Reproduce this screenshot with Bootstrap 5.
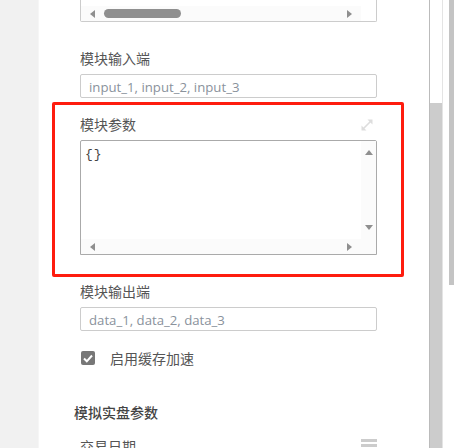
<!DOCTYPE html>
<html lang="zh-CN">

<head>
    <link href="https://cdn.jsdelivr.net/npm/bootstrap@5.3.0/dist/css/bootstrap.min.css" rel="stylesheet">
    <script src="https://cdn.jsdelivr.net/npm/bootstrap@5.3.0/dist/js/bootstrap.bundle.min.js"></script>
    <meta charset="UTF-8" />
    <title>模块参数</title>
    <style>
        html, body { height: 448px; overflow: hidden; background: #fff; }
        body { font-family: "Open Sans", "Noto Sans CJK SC", sans-serif; font-size: 14px; color: #555; }
        .page-wrap { height: 448px; }
        .side-gutter { width: 39px; background: #f1f1f1; border-right: 1px solid #f6f6f6; flex: none; }
        .side-panel { width: 390px; flex: none; position: relative; padding-left: 41px; }
        .v-track { width: 14px; flex: none; border-left: 1px solid #bbb; border-right: 1px solid #e4e4e4; }
        .v-track-thumb { margin-top: 103px; height: 345px; background: #ccc; }
        .outer-track { width: 5px; height: 285px; margin-left: 6px; background: #c4c4c4; flex: none; }
        .field-label { font-family: "Noto Sans CJK SC", sans-serif; font-size: 14px; line-height: 20px; color: #555; height: 20px; }
        .code-top { width: 297px; height: 22px; border: 1px solid #ccc; border-top: 0; border-radius: 0 0 2px 2px; margin-bottom: 26px; position: relative; }
        .h-strip { position: absolute; left: 0; right: 0; bottom: 0; height: 15px; background: #fbfbfb; }
        .h-strip-top { right: 15px; }
        .top-thumb { position: absolute; left: 23px; top: 3px; width: 77px; height: 9px; border-radius: 5px; background: #8f8f8f; }
        .tri { position: absolute; width: 0; height: 0; border-style: solid; border-color: transparent; }
        .tri-left { left: 9px; bottom: 3px; border-width: 4.5px 5px 4.5px 0; border-right-color: #8f8f8f; }
        .tri-right { right: 24px; bottom: 3px; border-width: 4.5px 0 4.5px 5px; border-left-color: #8f8f8f; }
        .tri-up { right: 3px; top: 9px; border-width: 0 4.5px 5px; border-bottom-color: #8f8f8f; }
        .tri-down { right: 3px; bottom: 24px; border-width: 5px 4.5px 0; border-top-color: #8f8f8f; }
        .text-field { width: 297px; height: 24px; margin-top: 6px; border: 1px solid #ccc; border-radius: 2px; padding: 0 8px; line-height: 24px; color: #8a929c; font-size: 13.2px; }
        .code-box { width: 297px; height: 115px; border: 1px solid #aaa; border-radius: 2px 2px 0 0; position: relative; margin-top: 6px; }
        .code-text { font-family: "Liberation Mono", monospace; font-size: 13px; line-height: 17px; letter-spacing: 1px; padding: 5px 0 0 4px; color: #444; }
        .v-strip { position: absolute; top: 0; right: 0; bottom: 0; width: 15px; background: #fbfbfb; }
        .red-frame { position: absolute; left: 13px; top: 102px; width: 352px; height: 175px; border: 3px solid #fe1c0e; border-radius: 2px; pointer-events: none; }
        .expand-ico { position: absolute; left: 322px; top: 119px; }
        .check-box { width: 14px; height: 14px; background: #777; border-radius: 2px; margin-left: 1px; }
        .cache-label { font-family: "Noto Sans CJK SC", sans-serif; font-size: 14px; line-height: 20px; margin-left: 15px; color: #555; }
        .block-title { font-family: "Noto Sans CJK SC", sans-serif; font-weight: 500; font-size: 14px; line-height: 20px; color: #444; margin-left: -6px; }
        .menu-ico { position: absolute; left: 322px; top: 439px; width: 16px; height: 9px; border-top: 3px solid #ccc; }
        .menu-ico::after { content: ""; display: block; height: 3px; margin-top: 2px; background: #ccc; }
    </style>
</head>

<body>
    <div class="page-wrap d-flex">
        <div class="side-gutter"></div>
        <div class="side-panel">
            <div class="code-top">
                <div class="h-strip h-strip-top">
                    <div class="top-thumb"></div>
                </div>
                <div class="tri tri-left"></div>
                <div class="tri tri-right"></div>
            </div>

            <div class="field-label">模块输入端</div>
            <div class="text-field">input_1, input_2, input_3</div>

            <div class="field-label" style="margin-top:16px">模块参数</div>
            <div class="code-box">
                <div class="v-strip"></div>
                <div class="h-strip"></div>
                <div class="code-text position-relative">{}</div>
                <div class="tri tri-up"></div>
                <div class="tri tri-down"></div>
                <div class="tri tri-left"></div>
                <div class="tri tri-right"></div>
            </div>

            <div class="field-label" style="margin-top:26px">模块输出端</div>
            <div class="text-field">data_1, data_2, data_3</div>

            <div class="d-flex align-items-center" style="margin-top:17px">
                <div class="check-box d-flex align-items-center justify-content-center">
                    <svg width="10" height="9" viewBox="0 0 10 9">
                        <path d="M1 4.5 L3.8 7.3 L9 1.5" fill="none" stroke="#fff" stroke-width="2" />
                    </svg>
                </div>
                <div class="cache-label">启用缓存加速</div>
            </div>

            <div class="block-title" style="margin-top:34px">模拟实盘参数</div>
            <div class="field-label" style="margin-top:14px">交易日期</div>

            <div class="red-frame"></div>
            <svg class="expand-ico" width="12" height="12" viewBox="0 0 12 12">
                <path d="M2.5 9.5 L9.5 2.5" stroke="#ddd" stroke-width="1.6" fill="none" />
                <path d="M6.5 0.5 H11.5 V5.5 Z M0.5 6.5 V11.5 H5.5 Z" fill="#ddd" />
            </svg>
            <div class="menu-ico"></div>
        </div>
        <div class="v-track">
            <div class="v-track-thumb"></div>
        </div>
        <div class="outer-track"></div>
    </div>
</body>

</html>
